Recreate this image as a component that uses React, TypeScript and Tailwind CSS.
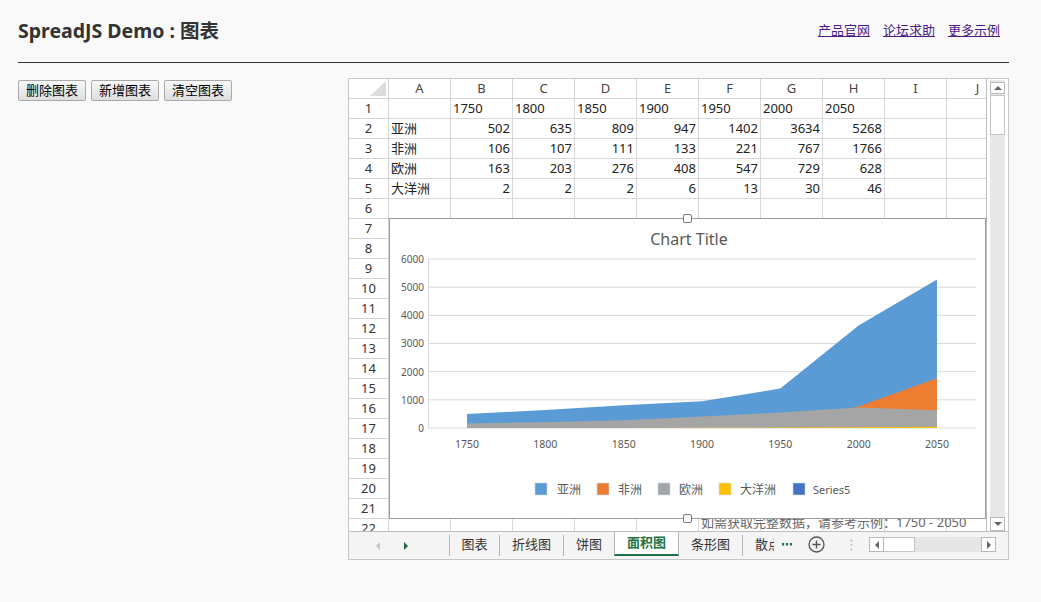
import React from 'react';

const font = { fontFamily: '"Noto Sans", "Noto Sans CJK SC", sans-serif' };

const cols = ['A', 'B', 'C', 'D', 'E', 'F', 'G', 'H', 'I', 'J'];
const years = [1750, 1800, 1850, 1900, 1950, 2000, 2050];

const series = [
  { name: '亚洲', color: '#5b9bd5', data: [502, 635, 809, 947, 1402, 3634, 5268] },
  { name: '非洲', color: '#ed7d31', data: [106, 107, 111, 133, 221, 767, 1766] },
  { name: '欧洲', color: '#a5a5a5', data: [163, 203, 276, 408, 547, 729, 628] },
  { name: '大洋洲', color: '#ffc000', data: [2, 2, 2, 6, 13, 30, 46] },
];

type Cell = { v: string; right?: boolean };

function rowCells(r: number): Cell[] {
  const empty = cols.map(() => ({ v: '' }));
  if (r === 1) return [{ v: '' }, ...years.map(y => ({ v: String(y) })), { v: '' }, { v: '' }];
  if (r >= 2 && r <= 5) {
    const s = series[r - 2];
    return [{ v: s.name }, ...s.data.map(n => ({ v: String(n), right: true })), { v: '' }, { v: '' }];
  }
  return empty;
}

const rows = Array.from({ length: 22 }, (_, i) => i + 1);

function Chart() {
  const x = (i: number) => 78 + i * 78.33;
  const y = (v: number) => 210 - v * 0.028167;
  const area = (data: number[]) =>
    data.map((v, i) => `${x(i).toFixed(1)},${y(v).toFixed(1)}`).join(' ') + ` ${x(6)},210 ${x(0)},210`;

  const legend = [
    { name: '亚洲', color: '#5b9bd5', sx: 146, tx: 168 },
    { name: '非洲', color: '#ed7d31', sx: 208, tx: 229 },
    { name: '欧洲', color: '#a5a5a5', sx: 269, tx: 290 },
    { name: '大洋洲', color: '#ffc000', sx: 330, tx: 351 },
    { name: 'Series5', color: '#4472c4', sx: 404, tx: 424 },
  ];

  return (
    <div className="absolute left-[40px] top-[139px] w-[597px] h-[301px] bg-white border border-[#9c9c9c]">
      <svg width="597" height="301" className="absolute -left-px -top-px" style={font}>
        <text x="300" y="27" textAnchor="middle" fontSize="16" fill="#595959">Chart Title</text>
        {[0, 1000, 2000, 3000, 4000, 5000, 6000].map(v => (
          <g key={v}>
            <line x1="39" x2="587" y1={y(v)} y2={y(v)} stroke="#d9d9d9" strokeWidth="1" />
            <text x="35" y={y(v) + 4} textAnchor="end" fontSize="10" fill="#595959">{v}</text>
          </g>
        ))}
        <line x1="39.5" x2="39.5" y1={y(6000)} y2="210" stroke="#d9d9d9" />
        {series.map(s => (
          <polygon key={s.name} points={area(s.data)} fill={s.color} />
        ))}
        {years.map((yr, i) => (
          <text key={yr} x={x(i)} y="230" textAnchor="middle" fontSize="10.5" fill="#595959">{yr}</text>
        ))}
        {legend.map(l => (
          <g key={l.name}>
            <rect x={l.sx} y="265" width="12" height="12" fill={l.color} stroke="#c9d9ee" strokeWidth="0.6" />
            <text x={l.tx} y="276" fontSize={l.name === 'Series5' ? 11 : 12} fill="#595959">{l.name}</text>
          </g>
        ))}
      </svg>
      <div className="absolute left-[293px] -top-[5px] w-[9px] h-[9px] rounded-[2px] bg-white border border-[#777]" />
      <div className="absolute left-[293px] -bottom-[5px] w-[9px] h-[9px] rounded-[2px] bg-white border border-[#777]" />
    </div>
  );
}

function Arrow({ dir, color }: { dir: 'l' | 'r' | 'u' | 'd'; color: string }) {
  const pts = { l: '5,0 5,8 1,4', r: '1,0 1,8 5,4', u: '0,5 8,5 4,1', d: '0,1 8,1 4,5' }[dir];
  const w = dir === 'l' || dir === 'r' ? 6 : 8;
  const h = dir === 'l' || dir === 'r' ? 8 : 6;
  return (
    <svg width={w} height={h}>
      <polygon points={pts} fill={color} />
    </svg>
  );
}

function Spreadsheet() {
  return (
    <div className="w-[661px] h-[482px] bg-white border border-[#c6c6c6] flex flex-col">
      <div className="flex h-[452px]">
        {/* grid */}
        <div className="relative w-[638px] overflow-hidden border-r border-[#bdbdbd]">
          <div className="flex h-[20px]">
            <div className="relative w-[40px] shrink-0 border-r border-b border-[#d4d4d4]">
              <svg width="16" height="15" className="absolute right-[2px] bottom-[2px]">
                <polygon points="16,0 16,15 0,15" fill="#dcdcdc" />
              </svg>
            </div>
            {cols.map(c => (
              <div
                key={c}
                className="w-[62px] shrink-0 border-r border-b border-[#d4d4d4] text-center text-[13px] leading-[19px] text-[#444]"
              >
                {c}
              </div>
            ))}
          </div>
          {rows.map(r => (
            <div key={r} className="flex h-[20px]">
              <div className="w-[40px] shrink-0 border-r border-b border-[#d4d4d4] text-center text-[13px] leading-[19px] text-[#333]">
                {r}
              </div>
              {rowCells(r).map((cell, i) => (
                <div
                  key={i}
                  className={`w-[62px] shrink-0 border-r border-b border-[#d9d9d9] px-[2px] text-[13px] leading-[19px] text-[#222] whitespace-nowrap ${
                    cell.right ? 'text-right' : 'text-left'
                  } ${r === 22 && i === 5 ? 'overflow-visible' : 'overflow-hidden'}`}
                >
                  {r === 22 && i === 5 ? (
                    <span className="relative -top-[6px] text-[#666]">如需获取完整数据，请参考示例：1750 - 2050</span>
                  ) : (
                    cell.v
                  )}
                </div>
              ))}
            </div>
          ))}
          <Chart />
        </div>
        {/* vertical scrollbar */}
        <div className="w-[21px] flex flex-col px-[3px] pt-[1px]">
          <div className="flex-1 flex flex-col bg-[#e8e8e8]">
            <div className="mt-[2px] h-[12px] bg-white border border-[#b9b9b9] flex items-center justify-center">
              <Arrow dir="u" color="#666" />
            </div>
            <div className="mt-[1px] h-[40px] bg-white border border-[#c4c4c4]" />
            <div className="flex-1" />
            <div className="h-[14px] bg-white border border-[#b9b9b9] flex items-center justify-center">
              <Arrow dir="d" color="#666" />
            </div>
          </div>
        </div>
      </div>
      {/* tab strip */}
      <div className="h-[28px] flex items-stretch bg-[#f4f4f4] border-t border-[#bdbdbd] text-[13px] text-[#333]">
        <div className="w-[100px] flex items-center">
          <div className="ml-[26px]">
            <Arrow dir="l" color="#c4c4c4" />
          </div>
          <div className="ml-[22px]">
            <Arrow dir="r" color="#1d6b3a" />
          </div>
        </div>
        <div className="w-px my-[3px] bg-[#b5b5b5]" />
        <div className="w-[49px] flex items-center justify-center pb-[2px]">图表</div>
        <div className="w-px my-[3px] bg-[#b5b5b5]" />
        <div className="w-[63px] flex items-center justify-center pb-[2px]">折线图</div>
        <div className="w-px my-[3px] bg-[#b5b5b5]" />
        <div className="w-[50px] flex items-center justify-center pb-[2px]">饼图</div>
        <div className="w-[65px] flex items-center justify-center bg-white border-x border-[#b5b5b5] border-b-2 border-b-[#217346] mb-[3px] font-semibold text-[#217346]">
          面积图
        </div>
        <div className="w-[63px] flex items-center justify-center pb-[2px]">条形图</div>
        <div className="w-px my-[3px] bg-[#b5b5b5]" />
        <div className="w-[32px] flex items-center pb-[2px] pl-[12px] overflow-hidden whitespace-nowrap">
          <span className="inline-block w-[19px] overflow-hidden">散点图</span>
        </div>
        <div className="w-[24px] flex items-center justify-center pb-[2px]">
          <svg width="10" height="3">
            <rect x="0" y="0" width="2.2" height="2.5" fill="#217346" />
            <rect x="3.9" y="0" width="2.2" height="2.5" fill="#217346" />
            <rect x="7.8" y="0" width="2.2" height="2.5" fill="#217346" />
          </svg>
        </div>
        <div className="w-[34px] flex items-center justify-center pb-[2px]">
          <svg width="17" height="17" viewBox="0 0 17 17">
            <circle cx="8.5" cy="8.5" r="7.5" fill="none" stroke="#555" strokeWidth="1.3" />
            <path d="M8.5 4.5v8M4.5 8.5h8" stroke="#555" strokeWidth="1.4" />
          </svg>
        </div>
        <div className="w-[36px] flex items-center justify-center pb-[2px]">
          <svg width="3" height="12">
            <circle cx="1.5" cy="1.5" r="1" fill="#bbb" />
            <circle cx="1.5" cy="6" r="1" fill="#bbb" />
            <circle cx="1.5" cy="10.5" r="1" fill="#bbb" />
          </svg>
        </div>
        <div className="w-[127px] flex items-center pb-[2px]">
          <div className="h-[15px] flex-1 flex bg-[#e6e6e6]">
            <div className="w-[15px] bg-white border border-[#b9b9b9] flex items-center justify-center">
              <Arrow dir="l" color="#666" />
            </div>
            <div className="w-[31px] bg-white border-y border-r border-[#c4c4c4]" />
            <div className="flex-1" />
            <div className="w-[15px] bg-white border border-[#b9b9b9] flex items-center justify-center">
              <Arrow dir="r" color="#666" />
            </div>
          </div>
        </div>
      </div>
    </div>
  );
}

export default function App() {
  const btn =
    'w-[68px] h-[21px] text-[13px] leading-[19px] text-black rounded-[2px] border border-[#a9a9a9] bg-gradient-to-b from-[#f8f8f8] to-[#dedede]';
  return (
    <div className="min-h-screen w-full bg-[#f9f9f9] pl-[18px] pr-[32px]" style={font}>
      <div className="h-[63px] flex items-center justify-between border-b border-[#333]">
        <h1 className="text-[19.5px] font-bold text-[#333]">SpreadJS Demo : 图表</h1>
        <div className="flex gap-[13px] pr-[9px] text-[13px]">
          <a href="#" className="underline text-[#4b1b86]">产品官网</a>
          <a href="#" className="underline text-[#4b1b86]">论坛求助</a>
          <a href="#" className="underline text-[#4b1b86]">更多示例</a>
        </div>
      </div>
      <div className="flex">
        <div className="w-[330px] pt-[17px] flex gap-[5px] items-start">
          <button className={btn}>删除图表</button>
          <button className={btn}>新增图表</button>
          <button className={btn}>清空图表</button>
        </div>
        <div className="pt-[15px]">
          <Spreadsheet />
        </div>
      </div>
    </div>
  );
}
